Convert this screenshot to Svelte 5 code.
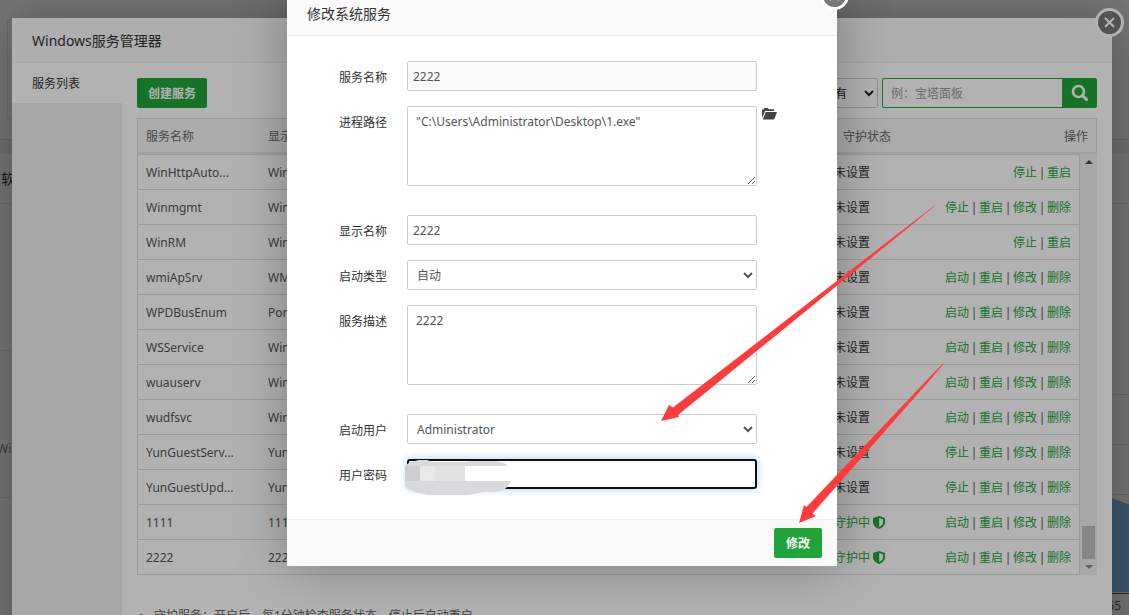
<script lang="ts">
	interface Service {
		name: string;
		display: string;
		guarded: boolean;
		actions: string[];
	}

	const full = ['重启', '修改', '删除'];

	const services: Service[] = [
		{ name: 'WinHttpAuto...', display: 'WinHTTP', guarded: false, actions: ['停止', '重启'] },
		{ name: 'Winmgmt', display: 'Windows', guarded: false, actions: ['停止', ...full] },
		{ name: 'WinRM', display: 'Windows', guarded: false, actions: ['停止', '重启'] },
		{ name: 'wmiApSrv', display: 'WMI', guarded: false, actions: ['启动', ...full] },
		{ name: 'WPDBusEnum', display: 'Portable', guarded: false, actions: ['启动', ...full] },
		{ name: 'WSService', display: 'Windows', guarded: false, actions: ['启动', ...full] },
		{ name: 'wuauserv', display: 'Windows', guarded: false, actions: ['启动', ...full] },
		{ name: 'wudfsvc', display: 'Windows', guarded: false, actions: ['启动', ...full] },
		{ name: 'YunGuestServ...', display: 'YunGuest', guarded: false, actions: ['停止', ...full] },
		{ name: 'YunGuestUpd...', display: 'YunGuest', guarded: false, actions: ['停止', ...full] },
		{ name: '1111', display: '1111', guarded: true, actions: ['启动', ...full] },
		{ name: '2222', display: '2222', guarded: true, actions: ['启动', ...full] }
	];

	let keyword = $state('');
	let serviceName = $state('2222');
	let path = $state('"C:\\Users\\Administrator\\Desktop\\1.exe"');
	let displayName = $state('2222');
	let description = $state('2222');
	let password = $state('');
</script>

{#snippet closeIcon()}
	<svg viewBox="0 0 29 29" width="29" height="29" aria-hidden="true">
		<circle cx="14.5" cy="14.5" r="13" fill="#777" stroke="#fff" stroke-width="3" />
		<path d="M10 10l9 9M19 10l-9 9" stroke="#fff" stroke-width="2" fill="none" />
	</svg>
{/snippet}

<div class="screen">
	<div class="page">
		<div class="summary"></div>
		<div class="panels">
			<div class="panel-title">软件</div>
			<div class="panel-body">
				<div class="apps">
					<div class="app"></div>
					<div class="app"><span>Windows</span></div>
				</div>
				<div class="chart">
					<svg viewBox="0 0 40 250" width="40" height="250" aria-hidden="true">
						<path d="M0 50.5H40M0 100.5H40M0 150.5H40M0 200.5H40" stroke="#d4d4d4" />
						<path d="M0 147L23 155L40 161V248H0Z" fill="#62a5dc" fill-opacity=".8" />
						<path d="M0 147L23 155L40 161" stroke="#999" fill="none" />
						<path d="M0 250H40" stroke="#555" stroke-width="2" />
					</svg>
					<span>55</span>
				</div>
			</div>
		</div>
	</div>

	<div class="shade"></div>

	<section class="manager">
		<button class="close" aria-label="关闭">{@render closeIcon()}</button>
		<h2 class="dialog-title">Windows服务管理器</h2>
		<div class="manager-body">
			<nav class="menu">
				<a href="#services">服务列表</a>
			</nav>
			<div class="content">
				<div class="toolbar">
					<button class="btn create">创建服务</button>
					<select class="filter" aria-label="状态">
						<option>所有</option>
					</select>
					<div class="search">
						<input type="text" placeholder="例：宝塔面板" aria-label="搜索" bind:value={keyword} />
						<button aria-label="搜索">
							<svg viewBox="0 0 18 18" width="18" height="18" aria-hidden="true">
								<circle cx="7.5" cy="7.5" r="5.5" fill="none" stroke="#fff" stroke-width="2.6" />
								<path d="M11.5 11.5l4 4" stroke="#fff" stroke-width="3" stroke-linecap="round" />
							</svg>
						</button>
					</div>
				</div>

				<table class="head">
					<thead>
						<tr>
							<th class="name">服务名称</th>
							<th>显示名称</th>
							<th class="guard">守护状态</th>
							<th class="ops">操作</th>
						</tr>
					</thead>
				</table>
				<div class="scroller">
					<table class="rows">
						<tbody>
							{#each services as service}
								<tr>
									<td class="name">{service.name}</td>
									<td>{service.display}</td>
									<td class="guard">
										{#if service.guarded}
											<a href="#guard">守护中
												<svg viewBox="0 0 12 13" width="12" height="13" aria-hidden="true">
													<path d="M6 0L12 2V6C12 9.5 9 12 6 13C3 12 0 9.5 0 6V2Z" fill="#20a53a" />
													<path d="M6.2 2L10 3.2V6.2C10 8.6 8 10.2 6.2 11Z" fill="#fff" />
												</svg>
											</a>
										{:else}
											未设置
										{/if}
									</td>
									<td class="ops">
										{#each service.actions as action, i}
											{#if i > 0}<span class="bar">|</span>{/if}<a href="#action">{action}</a>
										{/each}
									</td>
								</tr>
							{/each}
						</tbody>
					</table>
					<div class="scrollbar">
						<svg viewBox="0 0 8 4" width="8" height="4" aria-hidden="true"><path d="M0 4L4 0L8 4Z" fill="#505050" /></svg>
						<div class="thumb"></div>
						<svg viewBox="0 0 8 4" width="8" height="4" aria-hidden="true"><path d="M0 0L4 4L8 0Z" fill="#8a8a8a" /></svg>
					</div>
				</div>

				<ul class="tips">
					<li>守护服务：开启后，每1分钟检查服务状态，停止后自动重启</li>
				</ul>
			</div>
		</div>
	</section>

	<div class="shade"></div>

	<div class="layer">
		<form class="editor" onsubmit={(e) => e.preventDefault()}>
			<button type="button" class="close" aria-label="关闭">{@render closeIcon()}</button>
			<h2 class="dialog-title">修改系统服务</h2>
			<div class="fields">
				<div class="line">
					<label for="service-name">服务名称</label>
					<input id="service-name" type="text" readonly bind:value={serviceName} />
				</div>
				<div class="line tall">
					<label for="path">进程路径</label>
					<textarea id="path" bind:value={path}></textarea>
					<button type="button" class="browse" aria-label="选择文件">
						<svg viewBox="0 0 15 12" width="15" height="12" aria-hidden="true">
							<path d="M0 10V1.5H1.5L2.3 0H6L6.8 1.3H12V3H3.2Z" fill="#444" />
							<path d="M3.7 4H15L12.2 11.5H.8Z" fill="#444" />
						</svg>
					</button>
				</div>
				<div class="line">
					<label for="display-name">显示名称</label>
					<input id="display-name" type="text" bind:value={displayName} />
				</div>
				<div class="line">
					<label for="start-type">启动类型</label>
					<select id="start-type">
						<option>自动</option>
					</select>
				</div>
				<div class="line tall">
					<label for="description">服务描述</label>
					<textarea id="description" bind:value={description}></textarea>
				</div>
				<div class="line">
					<label for="user">启动用户</label>
					<select id="user">
						<option>Administrator</option>
					</select>
				</div>
				<div class="line">
					<label for="password">用户密码</label>
					<div class="secret">
						<input id="password" class="active" type="text" bind:value={password} />
						<svg class="mosaic" viewBox="0 0 106 35" width="106" height="35" aria-hidden="true">
							<path d="M0 6L5 2L14 0H22L28 2H60L66 1H92L99 3L103 6V21H106L103 26L99 30L90 32H78L64 35H22L10 32L3 29L0 26Z" fill="#d6dadd" />
							<path d="M60 6H106V21H60Z" fill="#fff" />
							<path d="M0 6H15V21H0Z" fill="#cccfce" />
							<path d="M15 6H30V21H15Z" fill="#e9e9e9" />
							<path d="M30 6H60V21H30Z" fill="#e2e2e2" />
						</svg>
					</div>
				</div>
			</div>
			<div class="footer">
				<button class="btn">修改</button>
			</div>
		</form>
	</div>

	<svg class="arrows" width="1129" height="615" viewBox="0 0 1129 615" aria-hidden="true">
		<defs>
			<linearGradient id="fade" x1="1" y1="0" x2="0" y2="1">
				<stop offset="0" stop-color="#ff3b3b" stop-opacity=".6" />
				<stop offset=".08" stop-color="#ff3b3b" />
			</linearGradient>
		</defs>
		<path d="M935 205L673 407.5L669 405L661 421L679 417L678 415L935 206Z" fill="url(#fade)" />
		<path d="M943 363L806.5 507L804 505L799 523L816 516L812.5 513.5L944 364Z" fill="url(#fade)" />
	</svg>
</div>

<style>
	:global(body) {
		margin: 0;
	}

	.screen {
		position: relative;
		height: 100vh;
		overflow: hidden;
		background: #f3f3f3;
		color: #555;
		font: 12px/20px 'Noto Sans', 'Noto Sans CJK SC', sans-serif;
	}

	.screen :is(input, select, textarea, button) {
		box-sizing: border-box;
		margin: 0;
		color: #555;
		font: inherit;
	}

	a {
		color: #20a53a;
		text-decoration: none;
	}

	.page {
		padding-top: 19px;
	}

	.summary {
		width: 80%;
		height: 98px;
		margin: 0 0 21px 7px;
		border: 1px solid #e0e0e0;
	}

	.panels {
		border-top: 14px solid #e4e4e4;
		box-shadow: 0 -1px #ccc;
	}

	.panel-title {
		height: 49px;
		padding-left: 1px;
		border-bottom: 1px solid #ddd;
		color: #333;
		font-size: 14px;
		line-height: 50px;
	}

	.panel-body {
		display: flex;
		justify-content: space-between;
	}

	.apps {
		width: 50%;
	}

	.app {
		height: 146px;
		border-bottom: 1px solid #ddd;
	}

	.app span {
		display: block;
		margin-left: -3px;
		padding-top: 88px;
		color: #6d7d92;
	}

	.chart {
		width: 40px;
		padding-top: 140px;
		text-align: right;
	}

	.chart svg {
		display: block;
	}

	.chart span {
		display: block;
		padding: 2px 8px 0 0;
	}

	.shade {
		position: absolute;
		inset: 0;
		background: rgba(0, 0, 0, 0.3);
	}

	.manager {
		position: absolute;
		inset: 18px 17px -60px 12px;
		display: flex;
		flex-direction: column;
		background: #fff;
		box-shadow: 1px 1px 50px rgba(0, 0, 0, 0.3);
	}

	.dialog-title {
		height: 44px;
		margin: 0;
		padding-left: 20px;
		border-bottom: 1px solid #eee;
		background: #fafafa;
		color: #333;
		font-size: 14px;
		font-weight: 400;
		line-height: 46px;
	}

	.close {
		position: absolute;
		top: -10px;
		right: -12px;
		width: 29px;
		height: 29px;
		padding: 0;
		border: 0;
		background: none;
	}

	.close svg {
		display: block;
	}

	.manager-body {
		display: flex;
		flex: 1;
	}

	.menu {
		width: 110px;
		background: #f0f0f0;
	}

	.menu a {
		display: block;
		height: 40px;
		padding-left: 20px;
		background: #fff;
		color: #333;
		line-height: 42px;
	}

	.content {
		flex: 1;
		padding: 15px;
	}

	.toolbar {
		display: flex;
		gap: 4px;
		margin-bottom: 10px;
	}

	.screen .btn {
		height: 30px;
		padding: 2px 12px 0;
		border: 0;
		border-radius: 2px;
		background: #20a53a;
		color: #fff;
		font-weight: 700;
	}

	.screen .create {
		width: 70px;
		padding: 2px 0 0;
	}

	.filter {
		width: 65px;
		padding: 0 5px;
		border: 1px solid #ccc;
		border-radius: 2px;
		background: #fff;
	}

	.screen .filter {
		margin-left: auto;
		color: #222;
	}

	.search {
		display: flex;
		height: 30px;
	}

	.search input {
		width: 180px;
		padding: 2px 8px 0;
		border: 1px solid #20a53a;
		border-right: 0;
		border-radius: 2px 0 0 2px;
		background: #fff;
	}

	.search input::placeholder {
		color: #999;
	}

	.search button {
		display: flex;
		align-items: center;
		justify-content: center;
		width: 35px;
		padding: 0;
		border: 0;
		border-radius: 0 2px 2px 0;
		background: #20a53a;
	}

	table {
		width: 100%;
		border-collapse: separate;
		border-spacing: 0;
		table-layout: fixed;
	}

	th,
	td {
		box-sizing: border-box;
		padding: 2px 8px 0;
		font-weight: 400;
		text-align: left;
		white-space: nowrap;
	}

	.head {
		border: 1px solid #ddd;
		border-bottom: 2px solid #e4e4e4;
		background: #f6f6f6;
		color: #666;
	}

	th {
		height: 33px;
	}

	td {
		height: 35px;
		border-bottom: 1px solid #ddd;
	}

	.name {
		width: 122px;
	}

	.guard {
		width: 108px;
	}

	td.guard {
		color: #333;
	}

	.guard svg {
		vertical-align: -2px;
	}

	.ops {
		width: 145px;
		text-align: right;
	}

	th.ops {
		width: 153px;
	}

	.bar {
		display: inline-block;
		width: 10px;
		text-align: center;
	}

	.scroller {
		display: flex;
	}

	.rows {
		flex: 1;
		border: 1px solid #ddd;
		border-bottom: 0;
	}

	.scrollbar {
		box-sizing: border-box;
		display: flex;
		flex-direction: column;
		align-items: center;
		gap: 6px;
		width: 17px;
		padding: 6px 0;
		background: #f1f1f1;
	}

	.thumb {
		width: 13px;
		height: 33px;
		margin-top: auto;
		background: #c1c1c1;
	}

	.tips {
		margin: 31px 0 0;
		padding-left: 17px;
		color: #666;
	}

	.layer {
		position: absolute;
		inset: -9px 5px auto 0;
		display: flex;
		justify-content: center;
	}

	.editor {
		position: relative;
		width: 550px;
		background: #fff;
		box-shadow: 1px 1px 50px rgba(0, 0, 0, 0.3);
	}

	.fields {
		display: flex;
		flex-direction: column;
		gap: 15px;
		padding: 25px 0 30px;
	}

	.line {
		display: flex;
		gap: 20px;
	}

	.tall {
		padding-bottom: 14px;
	}

	.line label {
		width: 100px;
		height: 30px;
		color: #333;
		line-height: 34px;
		text-align: right;
	}

	.line :is(input, select, textarea) {
		width: 350px;
		height: 30px;
		padding: 0 5px;
		border: 1px solid #ccc;
		border-radius: 2px;
		background: #fff;
	}

	.line input[readonly] {
		background: #fafafa;
	}

	.line textarea {
		height: 80px;
		padding: 5px 8px;
	}

	.browse {
		align-self: flex-start;
		padding: 0;
		border: 0;
		background: none;
	}

	.line .browse {
		margin: 2px 0 0 -15px;
	}

	.browse svg {
		display: block;
	}

	.secret {
		position: relative;
		height: 30px;
	}

	.line .active {
		border: 2px solid #101010;
		border-radius: 3px;
		outline: 0;
		box-shadow: 0 0 8px rgba(102, 175, 233, 0.6);
	}

	.mosaic {
		position: absolute;
		top: 1px;
		left: -2px;
	}

	.footer {
		display: flex;
		justify-content: flex-end;
		padding: 8px 15px;
		border-top: 1px solid #eee;
		background: #f9f9f9;
	}

	.arrows {
		position: absolute;
		top: 0;
		left: 0;
		pointer-events: none;
	}
</style>
